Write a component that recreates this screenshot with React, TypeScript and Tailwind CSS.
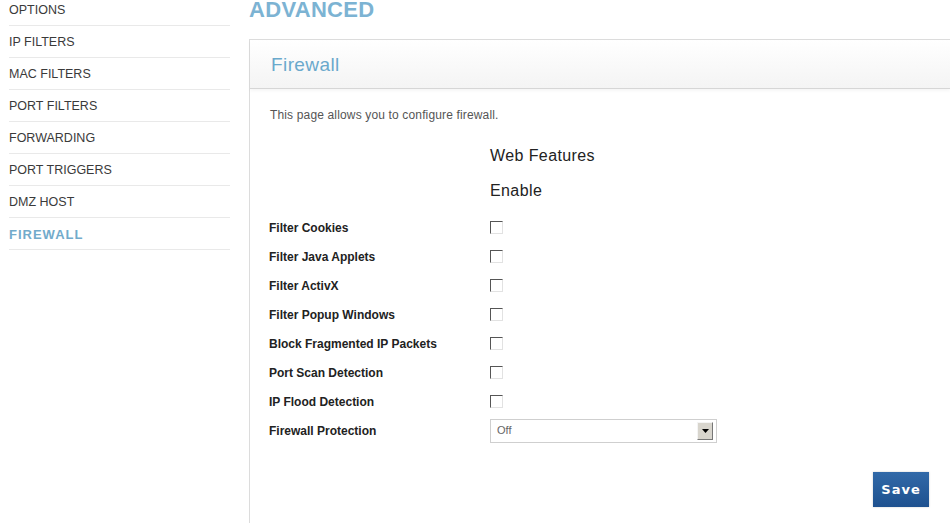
const navItems = [
  'OPTIONS',
  'IP FILTERS',
  'MAC FILTERS',
  'PORT FILTERS',
  'FORWARDING',
  'PORT TRIGGERS',
  'DMZ HOST',
  'FIREWALL',
]

const features = [
  'Filter Cookies',
  'Filter Java Applets',
  'Filter ActivX',
  'Filter Popup Windows',
  'Block Fragmented IP Packets',
  'Port Scan Detection',
  'IP Flood Detection',
]

function Checkbox() {
  return (
    <span className="block w-[13px] h-[13px] bg-white border border-t-[#555] border-l-[#555] border-b-[#e2e2e2] border-r-[#e2e2e2]" />
  )
}

export default function App() {
  return (
    <div className="flex w-[950px] h-[523px] overflow-hidden bg-white font-['Liberation_Sans',Arial,sans-serif]">
      <nav className="w-[249px] shrink-0 pl-[9px] pr-[19px]">
        <ul className="-mt-[6px]">
          {navItems.map((item) => (
            <li
              key={item}
              className={
                item === 'FIREWALL'
                  ? 'h-[32px] pt-[2px] flex items-center border-b border-[#e9e9e9] text-[13px] font-bold tracking-[1px] text-[#72abcb]'
                  : 'h-[32px] pt-[2px] flex items-center border-b border-[#e9e9e9] text-[12.5px] text-[#3a3a3a]'
              }
            >
              {item}
            </li>
          ))}
        </ul>
      </nav>

      <main className="flex-1 flex flex-col">
        <h1 className="h-[39px] text-[22px] leading-[20px] font-bold text-[#7cb3d3] tracking-[0.3px]">
          ADVANCED
        </h1>
        <section className="flex-1 border-t border-l border-[#dcdcdc] flex flex-col">
          <div className="h-[49px] border-b border-[#d6d6d6] bg-gradient-to-b from-white to-[#f4f4f4] flex items-center pl-[21px] shadow-[0_2px_3px_rgba(0,0,0,0.04)]">
            <h2 className="text-[19px] pt-[2px] text-[#6aa9cc] tracking-[0.4px]">Firewall</h2>
          </div>

          <div className="pl-[19px] pt-[19px]">
            <p className="pl-px text-[12px] tracking-[0.15px] text-[#555] leading-[14px]">
              This page allows you to configure firewall.
            </p>

            <div className="ml-[221px] mt-[24px] text-[16px] tracking-[0.4px] text-[#222] leading-[20px]">
              Web Features
            </div>
            <div className="ml-[221px] mt-[15px] text-[16px] tracking-[0.4px] text-[#222] leading-[20px]">
              Enable
            </div>

            <div className="mt-[12px] flex flex-col">
              {features.map((f) => (
                <div key={f} className="h-[29px] flex items-center">
                  <span className="w-[221px] text-[12px] font-bold text-[#222]">{f}</span>
                  <Checkbox />
                </div>
              ))}
              <div className="h-[29px] flex items-center">
                <span className="w-[221px] text-[12px] font-bold text-[#222]">Firewall Protection</span>
                <div className="w-[227px] h-[24px] border border-[#cfcfcf] bg-white flex items-center justify-between pl-[6px] pr-[3px]">
                  <span className="text-[11px] text-[#666]">Off</span>
                  <span className="w-[16px] h-[18px] bg-[#d8d5cd] border border-t-[#f4f4f4] border-l-[#f4f4f4] border-b-[#777] border-r-[#777] flex items-center justify-center">
                    <svg width="7" height="4" viewBox="0 0 7 4">
                      <path d="M0 0h7L3.5 4z" fill="#000" />
                    </svg>
                  </span>
                </div>
              </div>
            </div>

            <div className="flex justify-end pr-[21px] mt-[27px]">
              <button
                type="button"
                className="w-[56px] h-[35px] bg-gradient-to-b from-[#3169a8] to-[#1e518f] text-white text-[13px] font-bold tracking-[1px] font-['DejaVu_Sans',sans-serif] shadow-[0_0_2px_rgba(0,0,0,0.2)]"
              >
                Save
              </button>
            </div>
          </div>
        </section>
      </main>
    </div>
  )
}
